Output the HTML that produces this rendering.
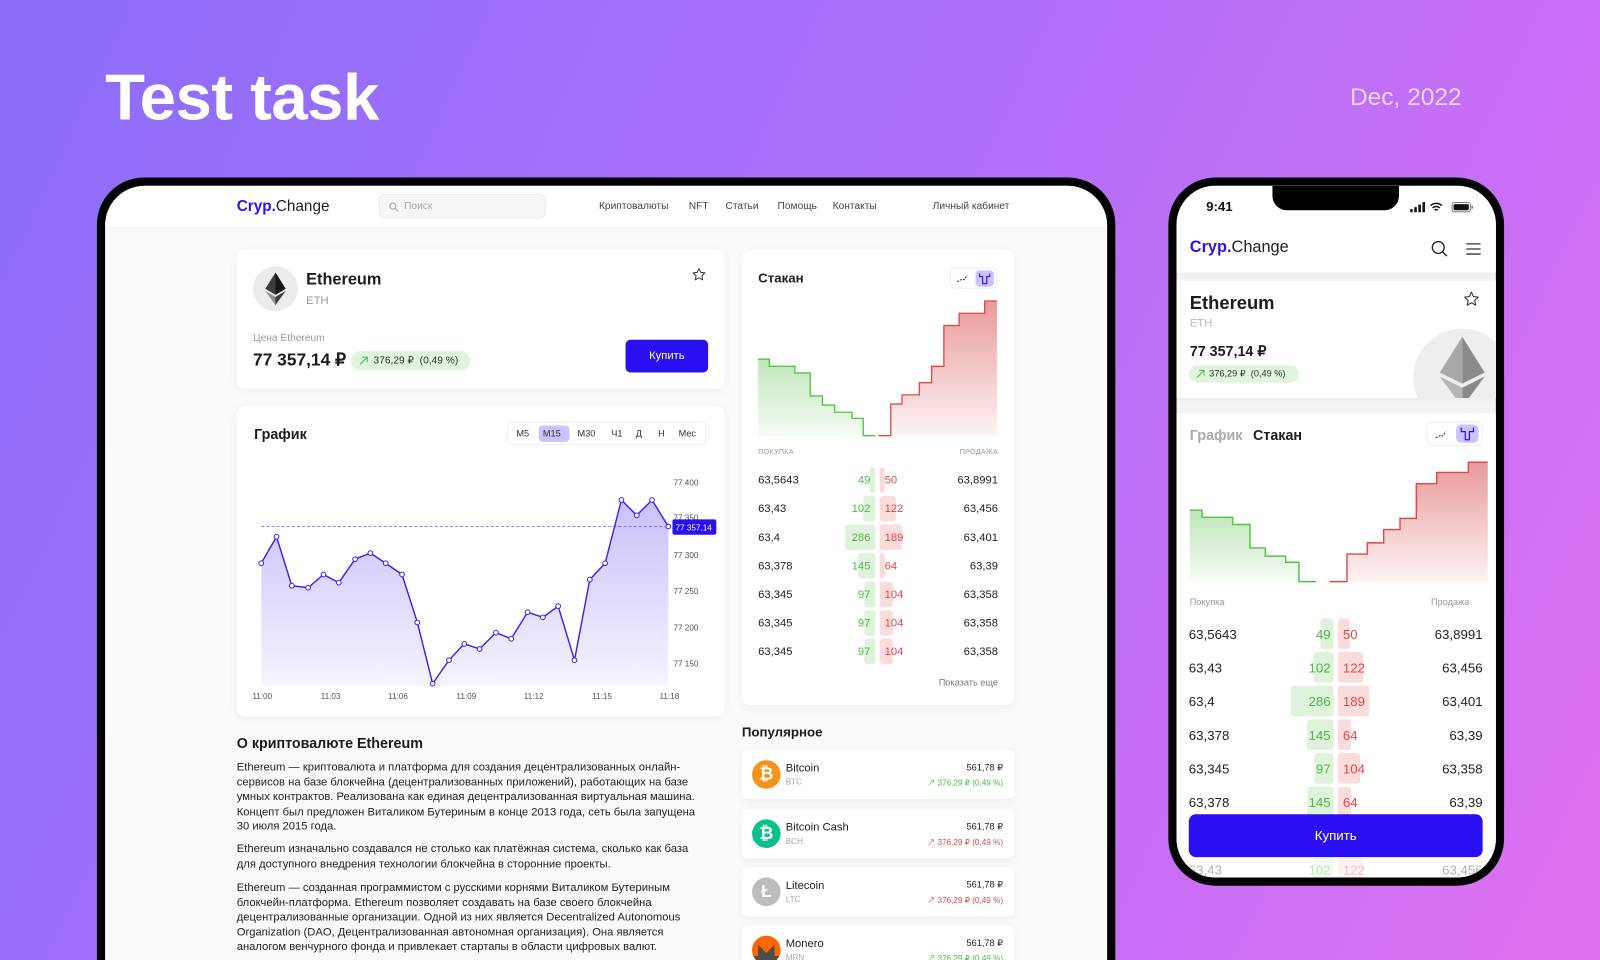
<!DOCTYPE html>
<html><head><meta charset="utf-8">
<style>
*{margin:0;padding:0;box-sizing:border-box}
html,body{width:1600px;height:960px;overflow:hidden;font-family:"Liberation Sans","Noto Sans CJK SC",sans-serif}
body{background:linear-gradient(115deg,#8a6df9 0%,#a76ff9 40%,#c66ff6 75%,#e070f0 100%)}
.s{position:absolute;left:0;top:0;width:1568px;height:941px;transform:scale(1.0204);transform-origin:0 0;overflow:hidden;background:linear-gradient(115deg,#8a6df9 0%,#a76ff9 40%,#c66ff6 75%,#e070f0 100%)}
.a{position:absolute}
.lap{position:absolute;left:95px;top:174px;width:998px;height:767px;background:#000;border-radius:46px 46px 0 0;padding:8px 8px 0 8px}
.scr{position:relative;width:100%;height:100%;background:#fafafb;border-radius:39px 39px 0 0;overflow:hidden}
.hdr{position:absolute;left:0;top:0;width:100%;height:40px;background:#fff;box-shadow:0 2px 8px rgba(0,0,0,.04)}
.nav{position:absolute;top:15px;font-size:10px;color:#444}
.card{position:absolute;background:#fff;border-radius:8px;box-shadow:0 2px 10px rgba(0,0,0,.05)}
.b{font-weight:bold;color:#1c1c1c}
.g{color:#9a9a9a}
.row{position:absolute;left:0;width:100%;height:26px;font-size:11px;color:#222}
.gb{position:absolute;background:#dff3dc;border-radius:3px}
.rb{position:absolute;background:#fbdcdc;border-radius:3px}
.gt{position:absolute;color:#4cb944}
.rt{position:absolute;color:#e04848}
.pi{position:absolute;left:624px;width:267px;height:48px;background:#fff;border-radius:6px;box-shadow:0 2px 10px rgba(0,0,0,.05)}
.coin{position:absolute;left:10px;top:10px;width:28px;height:28px;border-radius:50%;color:#fff;font-weight:bold;font-size:17px;text-align:center;line-height:28px}
.pn{position:absolute;left:43px;top:12px;font-size:11px;color:#222}
.pt{position:absolute;left:43px;top:27px;font-size:8px;color:#aaa}
.pp{position:absolute;right:11px;top:12px;font-size:9px;color:#222}
.pc{position:absolute;right:11px;top:27px;font-size:8px}
.ph{position:absolute;left:1145px;top:174px;width:329px;height:694px;background:#000;border-radius:46px;padding:8px}
.pscr{position:relative;width:100%;height:100%;background:#f4f4f6;border-radius:38px;overflow:hidden}
.prow{position:absolute;left:0;width:100%;height:30px;font-size:13px;color:#222}
</style></head><body><div class="s">

<div class="a" style="left:103px;top:58px;font-size:64px;font-weight:bold;color:#fff;letter-spacing:-0.5px">Test task</div>
<div class="a" style="left:1323px;top:82px;font-size:24px;color:#e6d6ff">Dec, 2022</div>

<div class="lap"><div class="scr">
 <div class="hdr">
  <div class="a" style="left:129px;top:12px;font-size:15px;color:#222"><b style="color:#2a12f2">Cryp.</b>Change</div>
  <div class="a" style="left:268px;top:8px;width:164px;height:24px;background:#f6f6f7;border:1px solid #ececee;border-radius:6px">
   <svg class="a" style="left:9px;top:7px" width="10" height="10" viewBox="0 0 10 10"><circle cx="4" cy="4" r="3" fill="none" stroke="#aaa" stroke-width="1"/><path d="M6.3 6.3L9 9" stroke="#aaa" stroke-width="1"/></svg>
   <span class="a" style="left:24px;top:6px;font-size:10px;color:#aaa">Поиск</span>
  </div>
  <div class="nav" style="left:484px">Криптовалюты</div>
  <div class="nav" style="left:572px">NFT</div>
  <div class="nav" style="left:608px">Статьи</div>
  <div class="nav" style="left:659px">Помощь</div>
  <div class="nav" style="left:713px">Контакты</div>
  <div class="nav" style="left:811px">Личный кабинет</div>
 </div>

 <div class="card" style="left:129px;top:63px;width:478px;height:136px">
  <div class="a" style="left:16px;top:16px;width:44px;height:44px;border-radius:50%;background:#ececec">
   <svg width="44" height="44" viewBox="-22 -22 44 44"><polygon points="0,-16 10,0 0,6" fill="#141414"/><polygon points="0,-16 -10,0 0,6" fill="#3c3c3c"/><polygon points="0,8 10,2 0,16" fill="#3c3c3c"/><polygon points="0,8 -10,2 0,16" fill="#8c8c8c"/></svg>
  </div>
  <div class="a b" style="left:68px;top:21px;font-size:16px">Ethereum</div>
  <div class="a g" style="left:68px;top:44px;font-size:11px">ETH</div>
  <svg class="a" style="left:446px;top:17px" width="14" height="14" viewBox="0 0 24 24"><path d="M12 2l3 6.5 7 .8-5.2 4.8 1.4 7-6.2-3.6-6.2 3.6 1.4-7L2 9.3l7-.8z" fill="none" stroke="#333" stroke-width="1.6" stroke-linejoin="round"/></svg>
  <div class="a g" style="left:16px;top:81px;font-size:10px">Цена Ethereum</div>
  <div class="a b" style="left:16px;top:98px;font-size:17px">77 357,14 ₽</div>
  <div class="a" style="left:112px;top:99px;width:117px;height:19px;border-radius:10px;background:#dff5dc;font-size:10px;color:#333;line-height:19px;padding-left:22px">376,29 ₽&nbsp; (0,49 %)
   <svg class="a" style="left:8px;top:5px" width="9" height="9" viewBox="0 0 9 9"><path d="M1 8L8 1M3 1h5v5" fill="none" stroke="#4cb944" stroke-width="1"/></svg></div>
  <div class="a" style="left:381px;top:88px;width:81px;height:32px;background:#2a0ff5;border-radius:5px;color:#fff;font-size:11px;text-align:center;line-height:32px">Купить</div>
 </div>

 <div class="card" style="left:129px;top:216px;width:478px;height:304px">
  <div class="a b" style="left:17px;top:19px;font-size:14px">График</div>
  <div class="a" style="left:265px;top:15px;width:195px;height:23px;border:1px solid #eee;border-radius:5px;font-size:9px;color:#333">
   <div class="a" style="left:30px;top:3px;width:30px;height:16px;background:#cbc4fb;border-radius:4px"></div>
   <span class="a" style="left:8px;top:6px">M5</span><span class="a" style="left:34px;top:6px">M15</span><span class="a" style="left:68px;top:6px">M30</span><span class="a" style="left:101px;top:6px">Ч1</span><span class="a" style="left:125px;top:6px">Д</span><span class="a" style="left:147px;top:6px">Н</span><span class="a" style="left:167px;top:6px">Мес</span>
  </div>
 </div>

 <div class="card" style="left:624px;top:63px;width:267px;height:446px">
  <div class="a b" style="left:16px;top:20px;font-size:13px">Стакан</div>
  <div class="a" style="left:204px;top:17px;width:46px;height:21px;border:1px solid #eee;border-radius:5px">
   <svg class="a" style="left:5px;top:5px" width="12" height="10" viewBox="0 0 12 10"><path d="M1 8L5 6L8 6L11 2" fill="none" stroke="#333" stroke-width="1" stroke-dasharray="2 1"/></svg>
   <div class="a" style="left:24px;top:2px;width:18px;height:16px;background:#cbc4fb;border-radius:4px"><svg width="18" height="16" viewBox="0 0 18 16"><path d="M4 3v3h3v7h4V6h3V3" fill="none" stroke="#2a12f2" stroke-width="1.1"/></svg></div>
  </div>
  <div class="a g" style="left:16px;top:195px;font-size:7px;letter-spacing:.3px">ПОКУПКА</div>
  <div class="a g" style="right:16px;top:195px;font-size:7px;letter-spacing:.3px">ПРОДАЖА</div>
  <div class="a g" style="right:16px;top:419px;font-size:9px;color:#777">Показать еще</div>
 </div>

 <div class="a" style="left:624px;top:0;width:267px;height:600px;font-size:11px">
  <div class="row" style="top:276px"><span class="a" style="left:16px;top:7px">63,5643</span><div class="gb" style="left:125px;width:6px;top:0;height:25px"></div><div class="rb" style="left:135px;width:5px;top:0;height:25px"></div><span class="gt" style="right:141px;top:7px">49</span><span class="rt" style="left:140px;top:7px">50</span><span class="a" style="right:16px;top:7px">63,8991</span></div>
  <div class="row" style="top:304px"><span class="a" style="left:16px;top:7px">63,43</span><div class="gb" style="left:119px;width:12px;top:0;height:25px"></div><div class="rb" style="left:135px;width:16px;top:0;height:25px"></div><span class="gt" style="right:141px;top:7px">102</span><span class="rt" style="left:140px;top:7px">122</span><span class="a" style="right:16px;top:7px">63,456</span></div>
  <div class="row" style="top:332px"><span class="a" style="left:16px;top:7px">63,4</span><div class="gb" style="left:101px;width:30px;top:0;height:25px"></div><div class="rb" style="left:135px;width:22px;top:0;height:25px"></div><span class="gt" style="right:141px;top:7px">286</span><span class="rt" style="left:140px;top:7px">189</span><span class="a" style="right:16px;top:7px">63,401</span></div>
  <div class="row" style="top:360px"><span class="a" style="left:16px;top:7px">63,378</span><div class="gb" style="left:114px;width:17px;top:0;height:25px"></div><div class="rb" style="left:135px;width:5px;top:0;height:25px"></div><span class="gt" style="right:141px;top:7px">145</span><span class="rt" style="left:140px;top:7px">64</span><span class="a" style="right:16px;top:7px">63,39</span></div>
  <div class="row" style="top:388px"><span class="a" style="left:16px;top:7px">63,345</span><div class="gb" style="left:120px;width:11px;top:0;height:25px"></div><div class="rb" style="left:135px;width:13px;top:0;height:25px"></div><span class="gt" style="right:141px;top:7px">97</span><span class="rt" style="left:140px;top:7px">104</span><span class="a" style="right:16px;top:7px">63,358</span></div>
  <div class="row" style="top:416px"><span class="a" style="left:16px;top:7px">63,345</span><div class="gb" style="left:120px;width:11px;top:0;height:25px"></div><div class="rb" style="left:135px;width:13px;top:0;height:25px"></div><span class="gt" style="right:141px;top:7px">97</span><span class="rt" style="left:140px;top:7px">104</span><span class="a" style="right:16px;top:7px">63,358</span></div>
  <div class="row" style="top:444px"><span class="a" style="left:16px;top:7px">63,345</span><div class="gb" style="left:120px;width:11px;top:0;height:25px"></div><div class="rb" style="left:135px;width:13px;top:0;height:25px"></div><span class="gt" style="right:141px;top:7px">97</span><span class="rt" style="left:140px;top:7px">104</span><span class="a" style="right:16px;top:7px">63,358</span></div>
 </div>

 <div class="a b" style="left:624px;top:528px;font-size:13px">Популярное</div>
 <div class="pi" style="top:553px"><div class="coin" style="background:#f7931a">₿</div><div class="pn">Bitcoin</div><div class="pt">BTC</div><div class="pp">561,78 ₽</div><div class="pc" style="color:#4cb944">↗ 376,29 ₽ (0,49 %)</div></div>
 <div class="pi" style="top:611px"><div class="coin" style="background:#0ac18e">₿</div><div class="pn">Bitcoin Cash</div><div class="pt">BCH</div><div class="pp">561,78 ₽</div><div class="pc" style="color:#e04848">↗ 376,29 ₽ (0,49 %)</div></div>
 <div class="pi" style="top:668px"><div class="coin" style="background:#bdbdbd">Ł</div><div class="pn">Litecoin</div><div class="pt">LTC</div><div class="pp">561,78 ₽</div><div class="pc" style="color:#e04848">↗ 376,29 ₽ (0,49 %)</div></div>
 <div class="pi" style="top:725px"><div class="coin" style="background:#ff6600;overflow:hidden"><svg width="28" height="28" viewBox="0 0 28 28"><path d="M0 20h6V9l8 8 8-8v11h6v8H0z" fill="#4c4c4c"/></svg></div><div class="pn">Monero</div><div class="pt">MRN</div><div class="pp">561,78 ₽</div><div class="pc" style="color:#4cb944">↗ 376,29 ₽ (0,49 %)</div></div>

 <div class="a b" style="left:129px;top:538px;font-size:14px">О криптовалюте Ethereum</div>
 <div class="a" style="left:129px;top:563px;width:470px;font-size:11px;line-height:14.5px;color:#222">Ethereum — криптовалюта и платформа для создания децентрализованных онлайн-<br>сервисов на базе блокчейна (децентрализованных приложений), работающих на базе<br>умных контрактов. Реализована как единая децентрализованная виртуальная машина.<br>Концепт был предложен Виталиком Бутериным в конце 2013 года, сеть была запущена<br>30 июля 2015 года.</div>
 <div class="a" style="left:129px;top:643px;width:470px;font-size:11px;line-height:14.5px;color:#222">Ethereum изначально создавался не столько как платёжная система, сколько как база<br>для доступного внедрения технологии блокчейна в сторонние проекты.</div>
 <div class="a" style="left:129px;top:681px;width:470px;font-size:11px;line-height:14.5px;color:#222">Ethereum — созданная программистом с русскими корнями Виталиком Бутериным<br>блокчейн-платформа. Ethereum позволяет создавать на базе своего блокчейна<br>децентрализованные организации. Одной из них является Decentralized Autonomous<br>Organization (DAO, Децентрализованная автономная организация). Она является<br>аналогом венчурного фонда и привлекает стартапы в области цифровых валют.</div>
</div></div>

<svg class="a" style="left:0;top:0" width="1568" height="941" viewBox="0 0 1568 941">
 <defs>
  <linearGradient id="pf" x1="0" y1="0" x2="0" y2="1"><stop offset="0" stop-color="#c9c0fa"/><stop offset="1" stop-color="#f6f4ff"/></linearGradient>
  <linearGradient id="gf" x1="0" y1="0" x2="0" y2="1"><stop offset="0" stop-color="#bfe6b9"/><stop offset="1" stop-color="#f6fcf5"/></linearGradient>
  <linearGradient id="rf" x1="0" y1="0" x2="0" y2="1"><stop offset="0" stop-color="#e99a9a"/><stop offset="1" stop-color="#fdf3f3"/></linearGradient>
 </defs>
 <polygon fill="url(#pf)" points="256,672 256,552 271,526 286,574 302,576 317,563 332,571 348,548 363,542 378,552 394,563 409,610 424,670 440,647 455,631 470,636 486,620 501,626 517,600 532,605 547,594 563,647 578,568 593,552 609,490 624,505 639,490 655,516 655,672"/>
 <line x1="256" y1="516" x2="657" y2="516" stroke="#6d5cf6" stroke-width="0.8" stroke-dasharray="3 2"/>
 <polyline fill="none" stroke="#3b20f0" stroke-width="1.4" points="256,552 271,526 286,574 302,576 317,563 332,571 348,548 363,542 378,552 394,563 409,610 424,670 440,647 455,631 470,636 486,620 501,626 517,600 532,605 547,594 563,647 578,568 593,552 609,490 624,505 639,490 655,516"/>
 <g fill="#fff" stroke="#3b20f0" stroke-width="1">
 <circle cx="256" cy="552" r="2.3"/><circle cx="271" cy="526" r="2.3"/><circle cx="286" cy="574" r="2.3"/><circle cx="302" cy="576" r="2.3"/><circle cx="317" cy="563" r="2.3"/><circle cx="332" cy="571" r="2.3"/><circle cx="348" cy="548" r="2.3"/><circle cx="363" cy="542" r="2.3"/><circle cx="378" cy="552" r="2.3"/><circle cx="394" cy="563" r="2.3"/><circle cx="409" cy="610" r="2.3"/><circle cx="424" cy="670" r="2.3"/><circle cx="440" cy="647" r="2.3"/><circle cx="455" cy="631" r="2.3"/><circle cx="470" cy="636" r="2.3"/><circle cx="486" cy="620" r="2.3"/><circle cx="501" cy="626" r="2.3"/><circle cx="517" cy="600" r="2.3"/><circle cx="532" cy="605" r="2.3"/><circle cx="547" cy="594" r="2.3"/><circle cx="563" cy="647" r="2.3"/><circle cx="578" cy="568" r="2.3"/><circle cx="593" cy="552" r="2.3"/><circle cx="609" cy="490" r="2.3"/><circle cx="624" cy="505" r="2.3"/><circle cx="639" cy="490" r="2.3"/><circle cx="655" cy="516" r="2.3"/></g>
 <g font-family="Liberation Sans" font-size="8" fill="#555">
  <text x="660" y="476">77 400</text><text x="660" y="510">77 350</text><text x="660" y="547">77 300</text><text x="660" y="582">77 250</text><text x="660" y="618">77 200</text><text x="660" y="653">77 150</text>
  <g text-anchor="middle"><text x="257" y="685">11:00</text><text x="324" y="685">11:03</text><text x="390" y="685">11:06</text><text x="457" y="685">11:09</text><text x="523" y="685">11:12</text><text x="590" y="685">11:15</text><text x="656" y="685">11:18</text></g>
 </g>
 <rect x="659" y="509" width="43" height="15" rx="2" fill="#2a0ff5"/>
 <text x="662" y="520" font-family="Liberation Sans" font-size="8" fill="#fff">77 357,14</text>
 <polygon fill="url(#gf)" points="743,427 743,352 754,352 754,359 779,359 779,365.5 794,365.5 794,388 806,388 806,397 818,397 818,404 835,404 835,410 846,410 846,427"/>
 <polyline fill="none" stroke="#4cc63f" stroke-width="1.3" points="743,352 754,352 754,359 779,359 779,365.5 794,365.5 794,388 806,388 806,397 818,397 818,404 835,404 835,410 846,410 846,427 858,427"/>
 <polygon fill="url(#rf)" points="873,427 873,396 884,396 884,387 901,387 901,375 913,375 913,359 925,359 925,319 940,319 940,307 965,307 965,295 977,295 977,427"/>
 <polyline fill="none" stroke="#e04848" stroke-width="1.3" points="861,427 873,427 873,396 884,396 884,387 901,387 901,375 913,375 913,359 925,359 925,319 940,319 940,307 965,307 965,295 977,295"/>
</svg>

<div class="ph"><div class="pscr">
 <div class="a" style="left:0;top:0;width:100%;height:85px;background:#fff;box-shadow:0 2px 8px rgba(0,0,0,.04)"></div>
 <div class="a" style="left:94px;top:0;width:124px;height:24px;background:#000;border-radius:0 0 14px 14px"></div>
 <div class="a" style="left:29px;top:13px;font-size:13px;font-weight:bold;color:#111">9:41</div>
 <svg class="a" style="left:228px;top:15px" width="66" height="12" viewBox="0 0 66 12"><rect x="1" y="8" width="2.5" height="3" fill="#111"/><rect x="5" y="6" width="2.5" height="5" fill="#111"/><rect x="9" y="3.5" width="2.5" height="7.5" fill="#111"/><rect x="13" y="1" width="2.5" height="10" fill="#111"/><path d="M21 4.5a8 8 0 0 1 11 0M23 6.8a5 5 0 0 1 7 0M25 9a2 2 0 0 1 3 0" fill="none" stroke="#111" stroke-width="1.5"/><rect x="42" y="1.5" width="18" height="9" rx="2.5" fill="none" stroke="#777" stroke-width="1"/><rect x="43.5" y="3" width="15" height="6" rx="1.5" fill="#111"/><rect x="61" y="4.5" width="1.5" height="3" fill="#777"/></svg>
 <div class="a" style="left:13px;top:52px;font-size:16px;color:#222"><b style="color:#2a12f2">Cryp.</b>Change</div>
 <svg class="a" style="left:249px;top:53px" width="18" height="18" viewBox="0 0 18 18"><circle cx="7.5" cy="7.5" r="5.8" fill="none" stroke="#222" stroke-width="1.3"/><path d="M11.8 11.8L16 16" stroke="#222" stroke-width="1.3"/></svg>
 <svg class="a" style="left:283px;top:55px" width="16" height="14" viewBox="0 0 16 14"><path d="M1 2h14M1 7h14M1 12h14" stroke="#333" stroke-width="1.3"/></svg>

 <div class="a" style="left:0;top:93px;width:100%;height:115px;background:#fff;overflow:hidden;box-shadow:0 2px 8px rgba(0,0,0,.04)">
  <div class="a b" style="left:13px;top:12px;font-size:18px">Ethereum</div>
  <div class="a g" style="left:13px;top:36px;font-size:11px;color:#bbb">ETH</div>
  <div class="a b" style="left:13px;top:61px;font-size:14px">77 357,14 ₽</div>
  <div class="a" style="left:12px;top:83px;width:108px;height:17px;border-radius:9px;background:#dff5dc;font-size:9px;color:#333;line-height:17px;padding-left:20px">376,29 ₽&nbsp; (0,49 %)
   <svg class="a" style="left:7px;top:4px" width="9" height="9" viewBox="0 0 9 9"><path d="M1 8L8 1M3 1h5v5" fill="none" stroke="#4cb944" stroke-width="1"/></svg></div>
  <svg class="a" style="left:281px;top:10px" width="16" height="16" viewBox="0 0 24 24"><path d="M12 2l3 6.5 7 .8-5.2 4.8 1.4 7-6.2-3.6-6.2 3.6 1.4-7L2 9.3l7-.8z" fill="none" stroke="#333" stroke-width="1.6" stroke-linejoin="round"/></svg>
  <div class="a" style="left:232px;top:47px;width:96px;height:96px;border-radius:50%;background:#eeeeee">
   <svg class="a" style="left:18px;top:6px" width="60" height="70" viewBox="-30 -35 60 70"><polygon points="0,-33 22,2 0,13" fill="#8a8a8a"/><polygon points="0,-33 -22,2 0,13" fill="#a8a8a8"/><polygon points="0,17 22,6 0,36" fill="#8a8a8a"/><polygon points="0,17 -22,6 0,36" fill="#b5b5b5"/></svg>
  </div>
 </div>

 <div class="a" style="left:0;top:223px;width:100%;height:460px;background:#fff">
  <div class="a" style="left:13px;top:13px;font-size:14px;font-weight:bold;color:#aaa">График</div>
  <div class="a b" style="left:75px;top:13px;font-size:14px">Стакан</div>
  <div class="a" style="left:245px;top:8px;width:55px;height:24px;border:1px solid #eee;border-radius:6px">
   <svg class="a" style="left:7px;top:7px" width="12" height="10" viewBox="0 0 12 10"><path d="M1 8L5 6L8 6L11 2" fill="none" stroke="#333" stroke-width="1" stroke-dasharray="2 1"/></svg>
   <div class="a" style="left:28px;top:2px;width:22px;height:18px;background:#cbc4fb;border-radius:5px"><svg width="22" height="18" viewBox="0 0 22 18"><path d="M5 3v4h4v8h4V7h4V3" fill="none" stroke="#2a12f2" stroke-width="1.2"/></svg></div>
  </div>
  <div class="a g" style="left:13px;top:180px;font-size:9px;color:#999">Покупка</div>
  <div class="a g" style="right:26px;top:180px;font-size:9px;color:#999">Продажа</div>
 </div>

 <div class="a" style="left:0;top:0;width:100%;height:678px">
  <div class="prow" style="top:424px"><span class="a" style="left:12px;top:8px">63,5643</span><div class="gb" style="left:141px;width:13px;top:0;height:30px"></div><div class="rb" style="left:158px;width:12px;top:0;height:30px"></div><span class="gt" style="right:162px;top:8px">49</span><span class="rt" style="left:163px;top:8px">50</span><span class="a" style="right:13px;top:8px">63,8991</span></div>
  <div class="prow" style="top:457px"><span class="a" style="left:12px;top:8px">63,43</span><div class="gb" style="left:134px;width:20px;top:0;height:30px"></div><div class="rb" style="left:158px;width:25px;top:0;height:30px"></div><span class="gt" style="right:162px;top:8px">102</span><span class="rt" style="left:163px;top:8px">122</span><span class="a" style="right:13px;top:8px">63,456</span></div>
  <div class="prow" style="top:490px"><span class="a" style="left:12px;top:8px">63,4</span><div class="gb" style="left:112px;width:42px;top:0;height:30px"></div><div class="rb" style="left:158px;width:31px;top:0;height:30px"></div><span class="gt" style="right:162px;top:8px">286</span><span class="rt" style="left:163px;top:8px">189</span><span class="a" style="right:13px;top:8px">63,401</span></div>
  <div class="prow" style="top:523px"><span class="a" style="left:12px;top:8px">63,378</span><div class="gb" style="left:128px;width:26px;top:0;height:30px"></div><div class="rb" style="left:158px;width:13px;top:0;height:30px"></div><span class="gt" style="right:162px;top:8px">145</span><span class="rt" style="left:163px;top:8px">64</span><span class="a" style="right:13px;top:8px">63,39</span></div>
  <div class="prow" style="top:556px"><span class="a" style="left:12px;top:8px">63,345</span><div class="gb" style="left:135px;width:19px;top:0;height:30px"></div><div class="rb" style="left:158px;width:22px;top:0;height:30px"></div><span class="gt" style="right:162px;top:8px">97</span><span class="rt" style="left:163px;top:8px">104</span><span class="a" style="right:13px;top:8px">63,358</span></div>
  <div class="prow" style="top:589px"><span class="a" style="left:12px;top:8px">63,378</span><div class="gb" style="left:128px;width:26px;top:0;height:30px"></div><div class="rb" style="left:158px;width:13px;top:0;height:30px"></div><span class="gt" style="right:162px;top:8px">145</span><span class="rt" style="left:163px;top:8px">64</span><span class="a" style="right:13px;top:8px">63,39</span></div>
  <div class="prow" style="top:655px;height:23px;overflow:hidden;opacity:.35"><span class="a" style="left:12px;top:8px">63,43</span><div class="gb" style="left:134px;width:20px;top:0;height:30px"></div><div class="rb" style="left:158px;width:25px;top:0;height:30px"></div><span class="gt" style="right:162px;top:8px">102</span><span class="rt" style="left:163px;top:8px">122</span><span class="a" style="right:13px;top:8px">63,456</span></div>
  <div class="a" style="left:12px;top:616px;width:288px;height:42px;background:#2a0ff5;border-radius:7px;color:#fff;font-size:13px;text-align:center;line-height:42px">Купить</div>
 </div>
</div></div>

<svg class="a" style="left:0;top:0" width="1568" height="941" viewBox="0 0 1568 941">
 <polygon fill="url(#gf)" points="1166,570 1166,500 1178,500 1178,507 1208,507 1208,514 1225,514 1225,537 1240,537 1240,545 1260,545 1260,551 1273,551 1273,570"/>
 <polyline fill="none" stroke="#4cc63f" stroke-width="1.4" points="1166,500 1178,500 1178,507 1208,507 1208,514 1225,514 1225,537 1240,537 1240,545 1260,545 1260,551 1273,551 1273,570 1290,570"/>
 <polygon fill="url(#rf)" points="1320,570 1320,543 1340,543 1340,532 1356,532 1356,519 1372,519 1372,508 1388,508 1388,474 1408,474 1408,463 1439,463 1439,453 1458,453 1458,570"/>
 <polyline fill="none" stroke="#e04848" stroke-width="1.4" points="1303,570 1320,570 1320,543 1340,543 1340,532 1356,532 1356,519 1372,519 1372,508 1388,508 1388,474 1408,474 1408,463 1439,463 1439,453 1458,453"/>
</svg>

</div></body></html>
